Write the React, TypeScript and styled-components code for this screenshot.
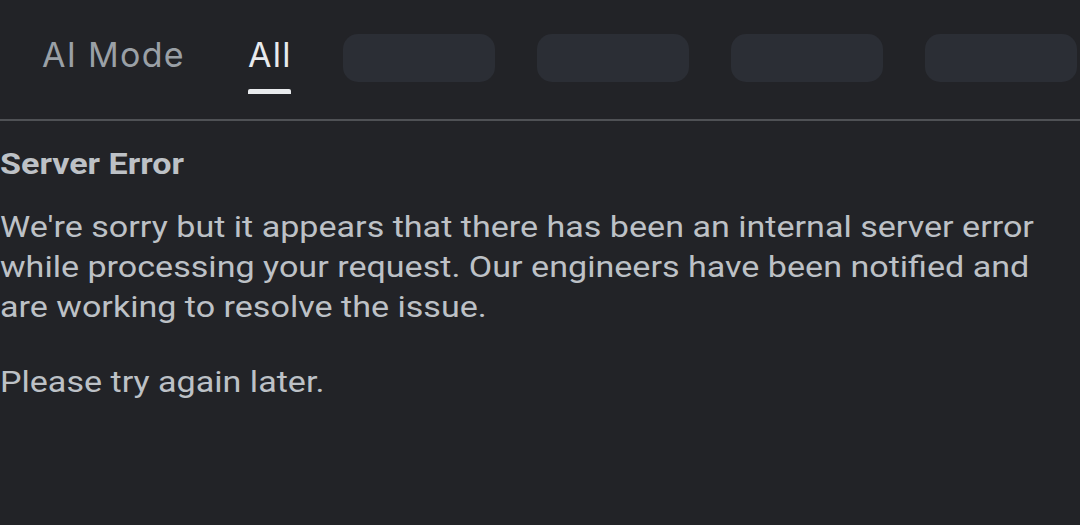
import React from 'react';
import styled, { createGlobalStyle } from 'styled-components';

const GlobalStyle = createGlobalStyle`
  html, body {
    margin: 0;
    padding: 0;
    background: #222327;
  }
  body {
    font-family: Roboto, "Liberation Sans", Arial, sans-serif;
    overflow: hidden;
  }
`;

const tabs = [
  { label: 'AI Mode', active: false },
  { label: 'All', active: true },
];

const placeholders = [1, 2, 3, 4];

export default function App() {
  return (
    <>
      <GlobalStyle />
      <StyledPage>
        <StyledTabBar>
          {tabs.map((tab) => (
            <StyledTab key={tab.label}>
              <StyledTabLabel $active={tab.active}>{tab.label}</StyledTabLabel>
              <StyledTabIndicator $active={tab.active} />
            </StyledTab>
          ))}
          {placeholders.map((p) => (
            <StyledChip key={p} />
          ))}
        </StyledTabBar>
        <StyledContent>
          <StyledHeading>Server Error</StyledHeading>
          <StyledText>
            We're sorry but it appears that there has been an internal server error
            while processing your request. Our engineers have been notified and are
            working to resolve the issue.
          </StyledText>
          <StyledText>Please try again later.</StyledText>
        </StyledContent>
      </StyledPage>
    </>
  );
}

const StyledPage = styled.div`
  width: 1080px;
  height: 525px;
  background: #222327;
  overflow: hidden;
`;

const StyledTabBar = styled.div`
  display: flex;
  align-items: flex-start;
  height: 85px;
  padding: 34px 0 0 42px;
  border-bottom: 2px solid #4f5155;
  white-space: nowrap;
`;

const StyledTab = styled.div`
  display: flex;
  flex-direction: column;
  padding-top: 3px;
  margin-right: 63px;

  &:nth-child(2) {
    margin-right: 51px;
  }
`;

const StyledTabLabel = styled.span<{ $active: boolean }>`
  font-family: Inter, Roboto, sans-serif;
  font-size: 34px;
  line-height: 35px;
  letter-spacing: 1.3px;
  color: ${(p) => (p.$active ? '#e8eaed' : '#9aa0a6')};
`;

const StyledTabIndicator = styled.span<{ $active: boolean }>`
  height: 5px;
  margin-top: 17px;
  margin-right: 1px;
  border-radius: 2px 2px 0 0;
  background: ${(p) => (p.$active ? '#e8eaed' : 'transparent')};
`;

const StyledChip = styled.div`
  flex: none;
  width: 152px;
  height: 48px;
  margin-right: 42px;
  border-radius: 15px;
  background: #2b2e35;
`;

/* the source text is rendered a bit wide, so stretch the block horizontally */
const StyledContent = styled.div`
  width: 945px;
  padding-top: 23px;
  transform: scaleX(1.136);
  transform-origin: 0 0;
`;

const StyledHeading = styled.h1`
  margin: 0 0 23px;
  font-size: 30px;
  line-height: 40px;
  font-weight: 700;
  color: #bdc1c6;
`;

const StyledText = styled.p`
  margin: 0 0 35px;
  font-size: 30px;
  line-height: 40px;
  font-weight: 400;
  color: #bdc1c6;
`;
